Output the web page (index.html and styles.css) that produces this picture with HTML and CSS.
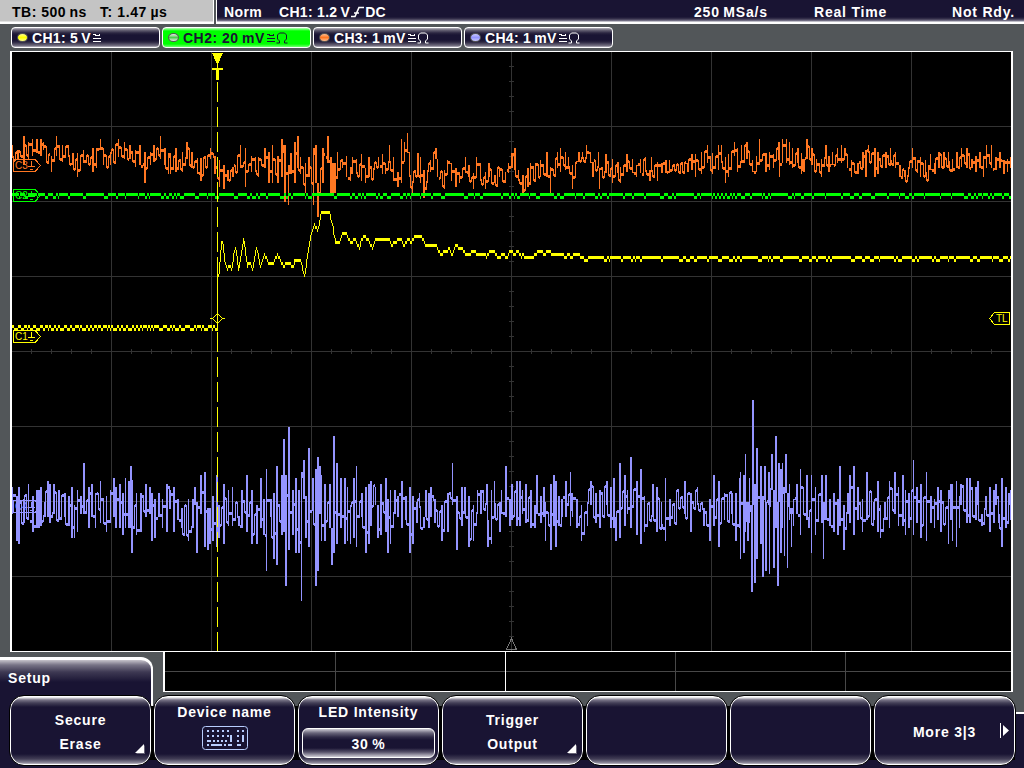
FILE: index.html
```html
<!DOCTYPE html>
<html lang="en">
<head>
<meta charset="utf-8">
<title>Oscilloscope</title>
<link rel="stylesheet" href="styles.css">
</head>
<body>
<header class="status">
  <div class="timebase"><span class="tb">TB: 500&#8201;ns</span><span class="tpos">T: 1.47&#8201;µs</span></div>
  <div class="acquisition">
    <span class="mode">Norm</span>
    <span class="source">CH1: 1.2&#8201;V<svg class="slope" width="14" height="12" viewBox="0 0 14 12"><path d="M0 10.5H4L8 1.5H13M3 7H8"/></svg>DC</span>
    <span class="rate">250&#8201;MSa/s</span>
    <span class="realtime">Real Time</span>
    <span class="ready">Not Rdy.</span>
  </div>
</header>
<nav class="channels">
  <div class="channel"><i class="led led-1"></i><span>CH1: 5&#8201;V</span><svg class="coupling" width="9" height="11" viewBox="0 0 9 11"><path d="M0.5 3V2H2.5V3H6.5V1.5M0 6.5H8M0 9.5H8"/></svg></div>
  <div class="channel active"><i class="led led-2"></i><span>CH2: 20&#8201;mV</span><svg class="coupling" width="21" height="12" viewBox="0 0 21 12"><path d="M0.5 3V2H2.5V3H6.5V1.5M0 6.5H8M0 9.5H8"/><path class="ohm" d="M9.5 11H12.5V9L10.5 7V3L12.5 1H17.5L19.5 3V7L17.5 9V11H20.5"/></svg></div>
  <div class="channel"><i class="led led-3"></i><span>CH3: 1&#8201;mV</span><svg class="coupling" width="21" height="12" viewBox="0 0 21 12"><path d="M0.5 3V2H2.5V3H6.5V1.5M0 6.5H8M0 9.5H8"/><path class="ohm" d="M9.5 11H12.5V9L10.5 7V3L12.5 1H17.5L19.5 3V7L17.5 9V11H20.5"/></svg></div>
  <div class="channel"><i class="led led-4"></i><span>CH4: 1&#8201;mV</span><svg class="coupling" width="21" height="12" viewBox="0 0 21 12"><path d="M0.5 3V2H2.5V3H6.5V1.5M0 6.5H8M0 9.5H8"/><path class="ohm" d="M9.5 11H12.5V9L10.5 7V3L12.5 1H17.5L19.5 3V7L17.5 9V11H20.5"/></svg></div>
</nav>
<main class="display">
  <svg class="scope" width="1003" height="641" viewBox="10 51 1003 641">
    <path class="screen" d="M10 51H1013V692H163V652H10Z"/>
    <path class="grid" d="M111.5 52V651M211.5 52V651M311.5 52V651M411.5 52V651M511.5 52V651M611.5 52V651M711.5 52V651M811.5 52V651M911.5 52V651M12 126.5H1011M12 201.5H1011M12 276.5H1011M12 351.5H1011M12 426.5H1011M12 501.5H1011M12 576.5H1011"/>
    <path class="grid" id="ticks"/>
    <path class="overview" d="M165 671.5H1011M335.5 652V691M675.5 652V691M845.5 652V691"/>
    <path class="frame" d="M505.5 652V691"/>
    <path class="center" d="M511.5 638.5L506.5 649.5H516.5Z"/>
    <path class="ch4" id="trace4"/>
    <path class="ch3" id="trace3"/>
    <path class="ch2" id="trace2"/>
    <path class="ch1" id="trace1"/>
    <path class="cursor" d="M217.5 82V651" stroke-dasharray="20 5"/>
    <path class="ch1" d="M212 53H223L218 64V68H223V70H219V80H216V70H212V68H217V64Z"/>
    <path class="flag flag-1" d="M210 318.5H212.5L217.5 313.5L222.5 318.5H225M212.5 318.5L217.5 323.5L222.5 318.5"/>
    <g class="flag flag-3"><path d="M13.5 159.5H35L40.5 165.5L35 171.5H13.5ZM31.5 161V166M28 166.5H35M30 169.5H33"/><text x="15" y="169">C3</text></g>
    <g class="flag flag-2"><path d="M13.5 189.5H35L40.5 195.5L35 201.5H13.5ZM31.5 191V196M28 196.5H35M30 199.5H33"/><text x="15" y="199">C2</text></g>
    <g class="flag flag-1"><path d="M13.5 330.5H35L40.5 336.5L35 342.5H13.5ZM31.5 332V337M28 337.5H35M30 340.5H33"/><text x="15" y="340">C1</text></g>
    <g class="flag flag-4"><path d="M13.5 500.5H35L40.5 506.5L35 512.5H13.5ZM31.5 502V507M28 507.5H35M30 510.5H33"/><text x="15" y="510">C4</text></g>
    <g class="flag flag-1"><path d="M1009.5 312.5H994.5L989.5 318.5L994.5 324.5H1009.5Z"/><text x="996" y="322">TL</text></g>
    <path class="edge" d="M10 51H1013V692H163V652H10ZM12 52V651H1011V52ZM165 652V691H1011V652Z"/>
  </svg>
</main>
<footer class="menu">
  <div class="shelf"></div>
  <div class="tab">Setup</div>
  <div class="keys">
    <div class="key two-line"><span>Secure</span><span>Erase</span><svg class="corner" width="10" height="10"><path class="shade" d="M10 1V10H1Z"/><path d="M9 0V9H0Z"/></svg></div>
    <div class="key titled"><span>Device name</span>
      <svg class="keyboard" width="46" height="24" viewBox="0 0 46 24"><rect x="0.5" y="0.5" width="45" height="23" rx="3"/><path d="M5 5H29" stroke-dasharray="2 3"/><path d="M5 10H27" stroke-dasharray="2 3"/><path d="M5 15H9M11 15H13M15 15H17M19 15H21M23 15H25M5 19H7M9 19H20M22 19H24M26 19H30M35 5H37M40 5H42M35 10H37M35 15H37M35 19H39M29 9V16M41 9V16"/></svg>
    </div>
    <div class="key titled"><span>LED Intensity</span><div class="value">30&#8201;%</div></div>
    <div class="key two-line"><span>Trigger</span><span>Output</span><svg class="corner" width="10" height="10"><path class="shade" d="M10 1V10H1Z"/><path d="M9 0V9H0Z"/></svg></div>
    <div class="key"></div>
    <div class="key"></div>
    <div class="key more"><span>More 3|3</span><svg class="next" width="10" height="16"><path d="M0 1H1V16H0ZM3 3L9 8.5L3 14Z"/></svg></div>
  </div>
</footer>
<script src="traces.js"></script>
</body>
</html>
```
FILE: styles.css
```css
* { box-sizing: border-box; }
body {
  margin: 0;
  width: 1024px;
  height: 768px;
  overflow: hidden;
  background: #525659;
  color: #fff;
  font: bold 14px/16px "Liberation Sans", Arial, sans-serif;
  white-space: nowrap;
}
.status { display: flex; height: 24px; gap: 2px; }
.timebase {
  display: flex;
  width: 214px;
  padding: 4px 0 0 12px;
  background: linear-gradient(#c4c4c4 21px, #fff 22px);
  border-right: 1px solid #fff;
  color: #000;
}
.tb { width: 88px; letter-spacing: .5px; }
.tpos { letter-spacing: .6px; }
.acquisition {
  display: flex;
  flex: 1;
  padding: 4px 0 0 7px;
  border-left: 1px solid #fff;
  background: linear-gradient(#191433 17px, #39344e 19px, #827e93 21px, #fff 22px);
}
.mode { width: 55px; letter-spacing: .4px; }
.source { width: 415px; letter-spacing: .3px; }
.slope { margin: 0 0 -1px 1px; fill: none; stroke: #fff; stroke-width: 1.6; }
.rate { width: 120px; letter-spacing: .8px; }
.realtime { width: 138px; letter-spacing: .8px; }
.ready { letter-spacing: .8px; }

.channels { display: flex; gap: 2px; height: 27px; padding: 3px 0 0 11px; }
.channel {
  display: flex;
  align-items: center;
  width: 149px;
  height: 21px;
  padding-left: 5px;
  border: 1px solid #fff;
  border-radius: 4px;
  letter-spacing: .3px;
  background: linear-gradient(#b8b5c0, #696577 2px, #2a2540 5px, #191433 7px, #191433 12px, #2a2540 14px, #797586 18px, #c8c5cf);
}
.channel.active { color: #191433; letter-spacing: .5px; background: linear-gradient(#b8ffb8, #00ff00 3px, #00ff00 16px, #70ff70); }
.led { width: 11px; height: 9px; margin-right: 4px; border: 1px solid #555; border-radius: 50%; }
.led-1 { background: linear-gradient(#ffff90, #ff0, #ffff90); }
.led-2 { background: linear-gradient(#eee, #4dcc4d 50%, #eee); }
.led-3 { background: linear-gradient(#ffbf90, #ff7722, #ffbf90); }
.led-4 { background: linear-gradient(#c9c9ff, #9494ff, #c9c9ff); }
.coupling { margin-left: 2px; fill: none; stroke: currentColor; shape-rendering: crispEdges; }
.ohm { shape-rendering: auto; }

.display { height: 641px; padding-left: 10px; }
.scope { display: block; shape-rendering: crispEdges; }
.screen { fill: #000; }
.grid { stroke: #333; fill: none; }
.overview { stroke: #484848; fill: none; }
.frame { stroke: #fff; fill: none; }
.center { stroke: #777; fill: none; }
.edge { fill: #fff; fill-rule: evenodd; }
.cursor { stroke: #ff0; }
.ch1 { fill: #ff0; }
.ch2 { fill: #0f0; }
.ch3 { fill: #ff7722; }
.ch4 { fill: #9494ff; }
.flag path { fill: none; stroke: currentColor; }
path.flag { fill: none; stroke: currentColor; }
.flag text { fill: currentColor; font: 10px "Liberation Sans", Arial, sans-serif; }
.flag-1 { color: #ff0; }
.flag-2 { color: #0f0; }
.flag-3 { color: #ff7722; }
.flag-4 { color: #9494ff; }

.menu { position: relative; height: 76px; letter-spacing: .8px; }
.shelf {
  position: absolute;
  inset: 20px 0 0 0;
  border-top: 2px solid #fff;
  background: #191433;
}
.tab {
  position: absolute;
  left: 0;
  top: -35px;
  width: 153px;
  height: 60px;
  padding: 10px 8px;
  border-top: 3px solid #fff;
  border-right: 2px solid #fff;
  border-top-right-radius: 12px;
  background: linear-gradient(#c7c4cc, #777386 5px, #3e3953 12px, #191433 22px);
}
.tab::after {
  content: "";
  position: absolute;
  left: 0;
  top: 50px;
  width: 20px;
  height: 58px;
  background: #191433;
}
.keys { position: relative; display: flex; gap: 1px; padding: 3px 0 0 9px; height: 74px; }
.keys::before {
  content: "";
  position: absolute;
  inset: 14px 9px 6px 14px;
  background: #000;
}
.key {
  position: relative;
  display: flex;
  flex-direction: column;
  align-items: center;
  width: 143px;
  height: 71px;
  border: 1px solid #000;
  border-radius: 15px;
  box-shadow: inset 0 0 0 1px #fff;
  background: linear-gradient(#fff 1px, #777386 4px, #423e56 7px, #191433 11px, #191433 58px, #423e56 63px, #918e9e 67px, #fff);
}
.two-line { padding-top: 16px; gap: 8px; }
.titled { padding-top: 8px; }
.more { justify-content: center; padding-top: 2px; }
.corner { position: absolute; right: 6px; bottom: 11px; fill: #fff; }
.shade { fill: #666275; }
.next { position: absolute; right: 5px; top: 26px; fill: #fff; }
.keyboard { margin-top: 6px; fill: none; stroke: #b9ceff; stroke-width: 1; }
.keyboard path { stroke-width: 2; shape-rendering: crispEdges; }
.value {
  width: 133px;
  height: 30px;
  margin-top: 8px;
  padding-top: 7px;
  border: 1px solid #fff;
  border-radius: 6px;
  text-align: center;
  background: linear-gradient(#d0ced6, #69657a 4px, #302b47 8px, #191433 11px, #191433 19px, #555068 23px, #d0ced6);
}
```
FILE: traces.js
```js
// Envelope samples: x, top, bottom.
const ch4 = [
12,487,514,16,496,541,18,487,544,23,499,523,28,484,520,32,496,532,36,490,528,38,490,528,40,487,526,44,502,517,47,481,517,49,484,523,53,484,514,58,490,520,64,493,517,68,496,526,71,487,538,74,505,538,77,490,532,80,496,514,83,463,514,88,487,528,91,484,517,95,493,528,100,481,523,106,496,532,110,490,523,113,478,517,115,487,528,119,484,528,122,493,535,125,478,528,128,481,528,130,466,528,131,480,553,136,493,535,140,493,532,145,484,517,149,487,514,151,493,541,154,499,538,158,493,517,162,499,528,166,484,532,169,490,509,173,487,532,177,499,520,181,508,528,188,499,541,192,499,528,194,487,505,196,502,553,200,475,514,204,472,547,207,508,550,209,508,544,212,496,541,216,475,547,218,505,538,223,484,544,228,490,526,232,487,526,238,516,526,241,490,528,246,475,532,251,490,544,256,505,544,260,478,528,263,499,535,266,469,571,270,499,517,273,493,559,276,466,565,281,475,535,283,439,532,285,475,586,288,427,550,292,490,535,295,478,553,298,490,553,301,472,601,303,460,499,305,496,538,308,448,547,312,478,511,315,469,586,317,457,571,319,466,514,321,475,541,324,484,541,329,484,528,331,528,565,333,436,553,336,463,544,
340,478,528,344,478,544,347,487,541,350,505,544,353,478,538,356,466,547,361,493,517,365,487,553,368,484,544,370,481,526,375,487,505,377,505,538,380,484,535,385,478,532,387,499,553,390,490,544,394,490,514,397,496,517,401,481,528,405,496,520,409,487,553,412,496,544,416,502,523,419,493,508,423,517,528,425,490,517,428,493,528,430,487,517,434,499,523,441,505,541,447,493,532,452,463,505,456,496,550,461,487,526,464,487,499,468,496,547,473,505,541,477,490,514,480,490,514,486,484,505,487,520,547,491,490,544,494,481,505,499,502,532,501,490,514,505,466,517,509,499,526,511,484,520,516,481,526,519,481,526,522,490,514,525,484,523,530,490,528,534,505,528,536,475,514,540,496,523,543,487,517,545,502,541,550,484,550,553,475,526,555,481,547,558,496,526,561,499,517,565,481,517,570,472,526,572,493,517,576,499,528,581,505,541,587,502,526,590,481,505,595,493,523,599,490,528,606,481,505,610,487,528,613,478,528,615,517,541,619,463,538,624,475,526,627,490,514,630,457,528,636,481,535,640,469,544,644,496,532,652,484,517,656,487,532,661,502,526,665,478,541,669,499,526,
684,481,514,690,493,532,697,487,505,703,508,526,709,499,541,713,475,526,718,481,547,724,493,520,731,493,514,735,493,541,739,478,528,740,472,559,743,475,553,745,454,532,747,502,541,749,478,523,751,505,592,752,400,505,754,484,583,756,448,559,760,466,544,762,496,577,764,466,500,765,502,571,768,472,505,769,505,574,771,454,490,773,490,568,775,436,528,777,502,586,778,463,502,780,469,553,782,463,528,784,487,556,785,454,493,787,493,568,789,484,520,791,508,547,793,499,526,796,484,514,800,469,535,806,475,520,808,517,528,811,475,553,815,487,535,821,475,523,823,502,559,825,475,520,829,499,526,833,493,532,837,499,535,839,466,526,843,505,550,847,493,514,849,475,523,853,466,535,857,487,520,862,499,532,866,472,520,873,502,520,877,481,532,880,505,538,884,502,520,889,481,528,894,472,514,898,487,526,902,475,526,905,490,535,908,493,528,913,460,535,916,487,523,920,484,538,926,472,541,930,496,523,934,499,528,937,487,520,940,490,532,948,490,544,950,484,520,952,484,541,956,481,547,959,496,528,960,484,505,966,478,523,969,478,523,975,487,520,977,481,505,981,514,526,985,496,510,989,487,532,993,490,523,995,484,505,998,514,523,1001,478,547,1005,487,528,1008,493,523,1010,490,520];
const ch3 = [
12,145,158,17,150,159,23,136,165,28,142,160,32,139,156,36,139,153,40,139,156,43,142,150,51,156,172,56,136,156,62,145,162,68,145,157,72,153,165,77,153,177,83,150,163,92,148,172,96,148,168,100,139,150,103,152,165,110,152,165,118,139,157,124,142,159,129,145,159,135,150,167,139,145,165,144,152,183,150,152,165,153,145,162,160,136,159,164,148,165,168,153,174,170,153,174,175,148,172,182,152,172,186,142,159,191,152,168,197,158,174,200,158,181,210,148,159,214,156,174,219,160,187,223,165,189,227,170,181,232,167,177,240,145,168,245,148,187,251,156,172,255,157,172,258,157,177,264,148,168,268,152,183,272,145,183,277,156,183,281,139,177,282,139,177,284,145,202,288,165,205,290,153,174,294,142,183,297,136,168,300,157,174,305,163,193,308,157,177,313,148,205,315,145,183,317,183,217,322,148,183,327,136,163,330,157,193,332,163,193,334,163,193,337,152,177,342,160,168,346,156,177,350,167,181,352,157,174,356,159,174,361,154,181,365,168,183,368,157,177,373,168,177,378,157,165,382,154,174,385,163,174,389,145,163,393,157,181,397,172,187,401,139,183,404,142,162,407,133,153,409,152,177,412,181,193,417,153,173,420,157,183,423,170,198,427,170,183,430,160,172,435,148,159,437,159,177,444,170,189,447,160,172,451,163,181,455,168,187,459,172,183,465,157,173,468,165,177,473,173,189,476,157,175,480,163,181,485,172,189,488,163,177,494,175,183,499,167,177,505,172,183,508,163,173,511,153,168,514,148,170,518,170,181,522,175,193,527,168,187,530,163,183,535,163,181,540,160,177,546,152,177,550,167,193,557,152,168,560,148,172,565,152,170,568,157,168,572,165,189,578,152,162,582,152,159,586,145,159,590,152,163,592,162,177,598,152,168,599,168,189,605,154,173,612,159,183,617,162,173,620,167,183,626,154,172,632,159,173,636,165,177,640,159,173,645,157,172,649,170,181,651,157,172,657,162,181,661,163,173,665,160,173,669,160,173,
687,163,172,691,154,170,695,154,177,701,152,174,707,145,163,712,153,174,718,145,170,721,145,163,725,157,183,728,154,177,734,142,156,737,148,172,741,145,163,746,142,159,752,160,172,756,156,172,759,139,163,765,153,172,769,152,170,773,154,168,778,142,160,779,150,177,782,139,163,786,139,163,789,142,165,792,148,168,797,148,163,801,153,174,803,159,172,806,139,159,811,148,165,816,159,168,821,159,177,825,145,159,828,156,172,832,152,165,837,148,163,841,145,163,844,148,156,847,154,168,851,160,177,857,163,174,862,152,168,865,150,177,868,145,153,874,148,177,877,152,174,885,152,168,890,148,162,895,152,168,899,165,177,904,170,177,908,167,177,912,148,168,917,160,173,920,157,177,925,160,174,928,165,181,930,154,170,934,163,174,938,152,168,943,152,168,948,152,163,952,159,172,956,152,168,961,148,167,966,148,168,971,159,168,975,156,172,979,152,168,983,156,177,986,145,168,991,145,168,995,157,170,999,152,168,1003,160,174,1007,159,172,1010,157,168];
const ch1 = [
217,275,218,276,221,241,222,243,224,260,227,270,229,265,231,270,233,255,235,247,238,270,241,252,243,239,247,267,249,262,252,270,256,247,260,267,264,254,269,264,273,262,277,254,283,267,287,262,293,262,300,261,304,276,307,253,310,237,314,224,317,231,321,212,329,213,333,230,336,243,339,243,342,233,345,233,351,243,354,239,359,245,363,236,367,236,372,245,374,239,388,238,392,242,400,240,405,242,408,239,411,242,415,236,421,236,425,245,435,245,440,254,445,252,449,248,452,252,455,246,462,249,465,254,475,252,477,255,486,256,489,252,497,253,507,257,509,252,521,253,525,257,532,257,537,252,550,252,553,255,577,255,582,257];

let seed = 7;
const rnd = () => (seed = (seed * 16807) % 2147483647) / 2147483647;
const bar = (x, top, bottom, w = 1) => `M${x} ${top}h${w}V${bottom}h${-w}Z`;
const show = (id, d) => document.getElementById(id).setAttribute('d', d);

// Noise bands: a zigzag visits every sampled peak, with small swings between them.
function noise(data, swing, thick) {
  const pts = [];
  for (let i = 0; i < data.length; i += 3) {
    const [x, top, bottom, next, nTop, nBottom] = data.slice(i, i + 6);
    pts.push([x, top, bottom]);
    if (next === undefined) break;
    const a = (top + bottom) / 2, b = (nTop + nBottom) / 2;
    let side = rnd() < .5 ? -1 : 1;
    for (let k = x + 2; k < next; k += 2) {
      const y = Math.round(a + (b - a) * (k - x) / (next - x) + side * (.25 + rnd() * .75) * swing);
      pts.push([k, y, y + 3]);
      side = -side;
    }
  }
  let d = '';
  pts.forEach(([x, top, bottom], i) => {
    d += bar(x, top, bottom, rnd() < thick ? 2 : 1);
    const next = pts[i + 1];
    if (!next) return;
    // Link column spans the gap between neighbouring strokes.
    if (next[1] > bottom) d += bar(x + 1, bottom - 2, next[1] + 2);
    else if (next[2] < top) d += bar(x + 1, next[2] - 2, top + 2);
    else if (next[0] - x > 1) {
      const y = Math.max(top, next[1]), e = Math.min(bottom, next[2]);
      d += bar(x + 1, y, Math.min(e, y + 4 + Math.round(rnd() * swing)));
    }
  });
  return d;
}

// Quiet traces: runs on two adjacent converter levels.
function levels(from, to, high, share, span) {
  let d = '', x = from;
  while (x < to) {
    const up = Math.min(to - x, 2 + Math.floor(rnd() * rnd() * span));
    d += bar(x, high, high + 3, up);
    x += up;
    const down = Math.min(to - x, 1 + Math.floor(rnd() * share));
    if (down > 0) d += bar(x, high + 3, high + 6, down);
    x += down;
  }
  return d;
}

function curve(points) {
  let d = '', last = 272, ripple = 0;
  for (let i = 0; i + 3 < points.length; i += 2) {
    const [x, y, nx, ny] = points.slice(i, i + 4);
    for (let k = x; k < nx; k++) {
      if (k > 262 && k % 3 === 0) ripple = rnd() < .2 ? 3 : 0;
      const v = ripple + 211 + 3 * Math.round((y + (ny - y) * (k - x) / (nx - x) - 212.5) / 3);
      d += v > last ? bar(k, last + 3, v + 3) : v < last ? bar(k, v, last) : bar(k, v, v + 3);
      last = v;
    }
  }
  return d;
}

show('trace4', noise(ch4, 16, .75));
show('trace3', noise(ch3, 8, .4));
show('trace2', levels(12, 1011, 193, 4, 22));
show('trace1', levels(12, 217, 325, 4, 4) + bar(217, 272, 331) + curve(ch1) + levels(582, 1011, 256, 4, 20));

let ticks = '';
for (let y = 66.5; y < 645; y += 15) ticks += `M509 ${y}h5`;
for (let x = 31.5; x < 1010; x += 20) ticks += `M${x} 349v5`;
show('ticks', ticks);
```
